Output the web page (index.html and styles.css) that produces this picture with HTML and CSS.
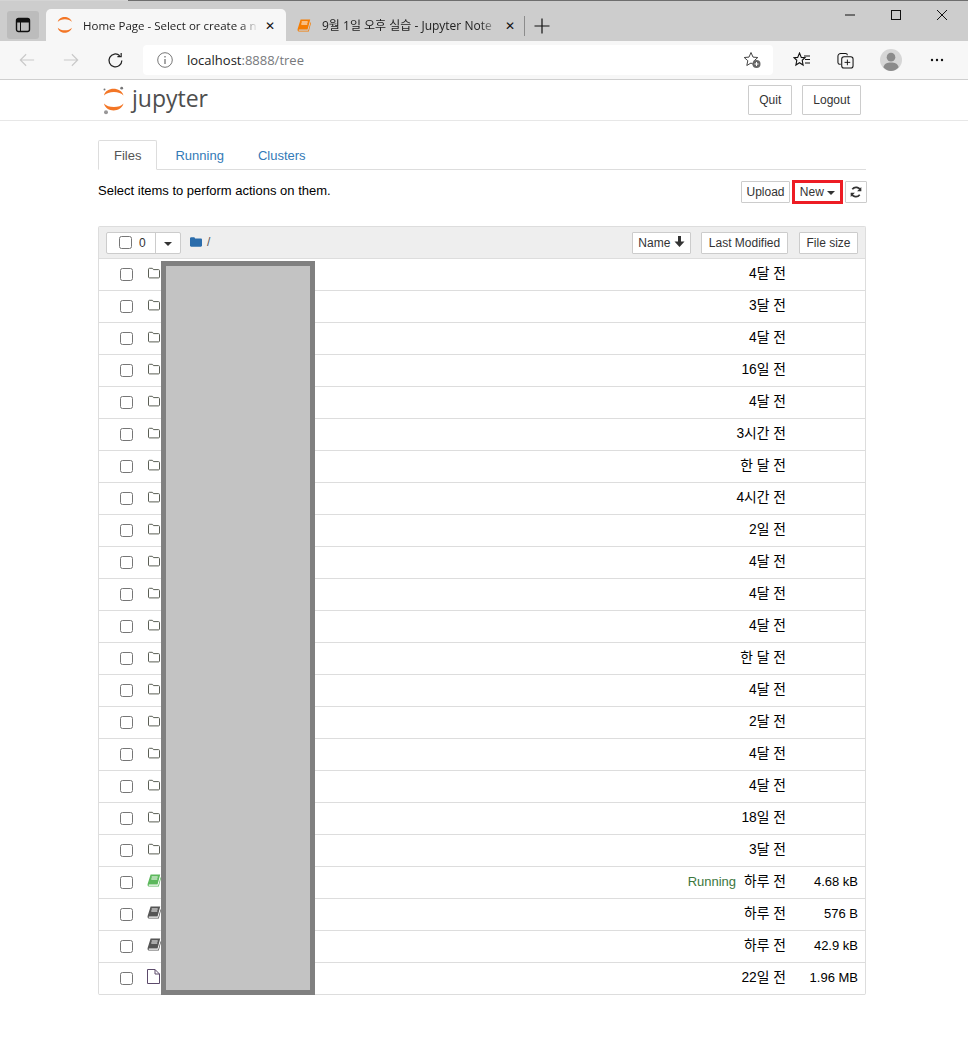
FILE: index.html
```html
<!DOCTYPE html>
<html lang="ko">
<head>
  <meta charset="UTF-8" />
  <title>Home Page - Select or create a notebook</title>
  <link rel="stylesheet" href="styles.css">
</head>
<body>
  <svg class="defs" width="0" height="0">
    <symbol id="i-folder" viewBox="0 0 14 12">
      <path d="M1.500 10V2.200c0-.5.4-.9.9-.9h2.700c.5 0 .8.3 1 .7l.3.6h5.200c.5 0 .9.4.9.9V10c0 .5-.4.9-.9.9H2.400c-.5 0-.9-.4-.9-.9z" fill="none" stroke="#5b5f55" stroke-width="1"/>
    </symbol>
    <symbol id="i-book" viewBox="0 0 14 13">
      <path d="M3.600.6h9.600L10.600 10.600H2.200C1.500 10.600 1.300 11.400 2 11.700h9.200l2.400-8.700.4 1-2.200 8.500H1.900C.6 12.500.3 11 .7 9.800z" fill="currentColor"/>
      <path d="M4.700 3h6M4.300 5h6" stroke="#fff" stroke-width="1"/>
    </symbol>
    <symbol id="i-file" viewBox="0 0 13 15">
      <path d="M.5.500h7.500l4.500 4.500v9.500H.5zM8 .5V5h4.500" fill="#fff" stroke="#5c4a6b" stroke-width="1"/>
    </symbol>
    <symbol id="i-jup" viewBox="0 0 22 29">
      <path d="M1 9.500C3 .6 18 .6 20.500 9.500 17 4.800 5 4.800 1 9.500z" fill="#f37626"/>
      <path d="M1 17.500C3 26.800 18 26.800 20.500 17.500 17 22.200 5 22.200 1 17.500z" fill="#f37626"/>
    </symbol>
  </svg>

  <div class="tabstrip">
    <div class="app-btn">
      <svg width="16" height="16" viewBox="0 0 16 16"><rect x="1.500" y="1.500" width="13" height="13" rx="2" fill="none" stroke="#111" stroke-width="1.400"/><path d="M1.500 5h13V2.500h-13zM5.500 5v9.500" fill="#111" stroke="#111" stroke-width="1"/></svg>
    </div>
    <div class="tab tab-active">
      <svg class="tab-icon" width="16" height="21"><use href="#i-jup"/></svg>
      <span class="tab-title">Home Page - Select or create a n</span>
      <span class="tab-close">✕</span>
    </div>
    <div class="tab">
      <svg class="tab-icon" width="14" height="13" style="color:#f57c00"><use href="#i-book"/></svg>
      <span class="tab-title">9월 1일 오후 실습 - Jupyter Note</span>
      <span class="tab-close">✕</span>
    </div>
    <div class="tab-sep"></div>
    <svg class="tab-plus" width="16" height="16" viewBox="0 0 16 16"><path d="M8 .5v15M.5 8h15" stroke="#111" stroke-width="1.200"/></svg>
    <div class="win-btns">
      <svg width="12" height="12" viewBox="0 0 12 12"><path d="M1 6h10" stroke="#111" stroke-width="1"/></svg>
      <svg width="12" height="12" viewBox="0 0 12 12"><rect x="1.500" y="1.500" width="9" height="9" fill="none" stroke="#111"/></svg>
      <svg width="12" height="12" viewBox="0 0 12 12"><path d="M1 1l10 10M11 1L1 11" stroke="#111" stroke-width="1"/></svg>
    </div>
  </div>

  <div class="addressbar">
    <svg class="nav" width="16" height="16" viewBox="0 0 18 16"><path d="M17 8H1.500M8 1.500L1.500 8 8 14.500" fill="none" stroke="#c9c9c9" stroke-width="1.300"/></svg>
    <svg class="nav" width="16" height="16" viewBox="0 0 18 16"><path d="M1 8h15.500M10 1.500L16.500 8 10 14.500" fill="none" stroke="#c9c9c9" stroke-width="1.300"/></svg>
    <svg class="nav" width="17" height="17" viewBox="0 0 18 18"><path d="M15.700 9A6.800 6.800 0 1 1 13.500 3.900M15 1v4h-4" fill="none" stroke="#222" stroke-width="1.300"/></svg>
    <div class="urlbox">
      <svg width="16" height="16" viewBox="0 0 16 16"><circle cx="8" cy="8" r="7.300" fill="none" stroke="#777" stroke-width="1"/><path d="M8 7v5M8 4v1.500" stroke="#777" stroke-width="1.300"/></svg>
      <span class="url">localhost<span class="url-dim">:8888/tree</span></span>
      <svg class="url-star" width="19" height="18" viewBox="0 0 19 18"><path d="M8 1.500l2 4.600 4.800.4-3.600 3.200 1 4.800L8 12l-4.200 2.500 1-4.800L1.200 6.500 6 6.100z" fill="none" stroke="#444" stroke-width="1"/><circle cx="13.500" cy="13" r="4" fill="#666"/><path d="M13.500 11v4M11.500 13h4" stroke="#fff"/></svg>
    </div>
    <div class="tools">
      <svg width="18" height="16" viewBox="0 0 18 16"><path d="M6.500 1l1.800 4.400 3.700.3-2.800 2.600.9 4.700-3.600-2.300-3.600 2.300.9-4.700L1 5.700l3.700-.3z" fill="none" stroke="#111" stroke-width="1.100"/><path d="M11 4h6M12 7.500h5M12 11h5" stroke="#111" stroke-width="1"/></svg>
      <svg width="17" height="17" viewBox="0 0 18 18"><path d="M4 13H3a2 2 0 0 1-2-2V4.500A3 3 0 0 1 4 1.500h5a2 2 0 0 1 2 2" fill="none" stroke="#111" stroke-width="1.100"/><rect x="5" y="5" width="12" height="12" rx="2.500" fill="#f7f7f7" stroke="#111" stroke-width="1.100"/><path d="M11 8v6M8 11h6" stroke="#111"/></svg>
      <svg width="22" height="22" viewBox="0 0 23 23"><circle cx="11.500" cy="11.500" r="11.500" fill="#d6d6d6"/><circle cx="11.500" cy="8.500" r="4.500" fill="#8b8b8b"/><path d="M3.500 19c1-4 4-5 8-5s7 1 8 5c-2 2.500-5 4-8 4s-6-1.500-8-4z" fill="#8b8b8b"/></svg>
      <svg class="tool-more" width="14" height="4" viewBox="0 0 14 4"><circle cx="2" cy="2" r="1.200" fill="#111"/><circle cx="7" cy="2" r="1.200" fill="#111"/><circle cx="12" cy="2" r="1.200" fill="#111"/></svg>
    </div>
  </div>

  <header class="site-header">
    <div class="container header-inner">
      <div class="logo">
        <svg class="logo-mark" width="22" height="29" viewBox="0 0 22 29">
          <use href="#i-jup"/>
          <circle cx="18.700" cy="2.200" r="1.400" fill="#767677"/>
          <circle cx="1.500" cy="3.500" r="1" fill="#767677"/>
          <circle cx="3" cy="26.200" r="2" fill="#989798"/>
        </svg>
        <span class="logo-text">jupyter</span>
      </div>
      <div class="header-btns">
        <button class="btn btn-big">Quit</button>
        <button class="btn btn-big">Logout</button>
      </div>
    </div>
  </header>

  <main class="container">
    <ul class="tabs">
      <li class="active">Files</li>
      <li>Running</li>
      <li>Clusters</li>
    </ul>

    <div class="actions">
      <span class="hint">Select items to perform actions on them.</span>
      <div class="action-btns">
        <button class="btn btn-upload">Upload</button>
        <button class="btn btn-new">New <i class="caret"></i></button>
        <button class="btn btn-refresh">
          <svg width="12" height="12" viewBox="0 0 12 12"><path d="M10.500 4.600A4.700 4.700 0 0 0 2.300 3.200M1.500 7.400a4.700 4.700 0 0 0 8.200 1.400" fill="none" stroke="#333" stroke-width="1.700"/><path d="M11.300 1v4.200H7.100zM.7 11V6.800h4.200z" fill="#333"/></svg>
        </button>
      </div>
    </div>

    <div class="list">
      <div class="list-head">
        <div class="select-group">
          <label class="select-all"><input type="checkbox"><span>0</span></label>
          <span class="select-drop"><i class="caret"></i></span>
        </div>
        <svg class="crumb-icon" width="12" height="10" viewBox="0 0 14 11"><path d="M0 1.500C0 .700.600 0 1.400 0h3c.8 0 1.100.5 1.400 1.200l.2.300h6.600c.8 0 1.400.6 1.400 1.400v6.700c0 .8-.6 1.400-1.400 1.400H1.400C.6 11 0 10.400 0 9.600z" fill="#2a6cab"/></svg>
        <span class="crumb">/</span>
        <div class="sort-btns">
          <button class="btn sort-name">Name <svg width="11" height="11" viewBox="0 0 11 11"><path d="M4 0h3v5.500h3.500L5.500 11 .5 5.500H4z" fill="#333"/></svg></button>
          <button class="btn sort-date">Last Modified</button>
          <button class="btn sort-size">File size</button>
        </div>
      </div>

      <div class="row"><input type="checkbox"><svg class="row-icon" width="14" height="12"><use href="#i-folder"/></svg><span class="name"></span><span class="date">4달 전</span><span class="size"></span></div>
      <div class="row"><input type="checkbox"><svg class="row-icon" width="14" height="12"><use href="#i-folder"/></svg><span class="name"></span><span class="date">3달 전</span><span class="size"></span></div>
      <div class="row"><input type="checkbox"><svg class="row-icon" width="14" height="12"><use href="#i-folder"/></svg><span class="name"></span><span class="date">4달 전</span><span class="size"></span></div>
      <div class="row"><input type="checkbox"><svg class="row-icon" width="14" height="12"><use href="#i-folder"/></svg><span class="name"></span><span class="date">16일 전</span><span class="size"></span></div>
      <div class="row"><input type="checkbox"><svg class="row-icon" width="14" height="12"><use href="#i-folder"/></svg><span class="name"></span><span class="date">4달 전</span><span class="size"></span></div>
      <div class="row"><input type="checkbox"><svg class="row-icon" width="14" height="12"><use href="#i-folder"/></svg><span class="name"></span><span class="date">3시간 전</span><span class="size"></span></div>
      <div class="row"><input type="checkbox"><svg class="row-icon" width="14" height="12"><use href="#i-folder"/></svg><span class="name"></span><span class="date">한 달 전</span><span class="size"></span></div>
      <div class="row"><input type="checkbox"><svg class="row-icon" width="14" height="12"><use href="#i-folder"/></svg><span class="name"></span><span class="date">4시간 전</span><span class="size"></span></div>
      <div class="row"><input type="checkbox"><svg class="row-icon" width="14" height="12"><use href="#i-folder"/></svg><span class="name"></span><span class="date">2일 전</span><span class="size"></span></div>
      <div class="row"><input type="checkbox"><svg class="row-icon" width="14" height="12"><use href="#i-folder"/></svg><span class="name"></span><span class="date">4달 전</span><span class="size"></span></div>
      <div class="row"><input type="checkbox"><svg class="row-icon" width="14" height="12"><use href="#i-folder"/></svg><span class="name"></span><span class="date">4달 전</span><span class="size"></span></div>
      <div class="row"><input type="checkbox"><svg class="row-icon" width="14" height="12"><use href="#i-folder"/></svg><span class="name"></span><span class="date">4달 전</span><span class="size"></span></div>
      <div class="row"><input type="checkbox"><svg class="row-icon" width="14" height="12"><use href="#i-folder"/></svg><span class="name"></span><span class="date">한 달 전</span><span class="size"></span></div>
      <div class="row"><input type="checkbox"><svg class="row-icon" width="14" height="12"><use href="#i-folder"/></svg><span class="name"></span><span class="date">4달 전</span><span class="size"></span></div>
      <div class="row"><input type="checkbox"><svg class="row-icon" width="14" height="12"><use href="#i-folder"/></svg><span class="name"></span><span class="date">2달 전</span><span class="size"></span></div>
      <div class="row"><input type="checkbox"><svg class="row-icon" width="14" height="12"><use href="#i-folder"/></svg><span class="name"></span><span class="date">4달 전</span><span class="size"></span></div>
      <div class="row"><input type="checkbox"><svg class="row-icon" width="14" height="12"><use href="#i-folder"/></svg><span class="name"></span><span class="date">4달 전</span><span class="size"></span></div>
      <div class="row"><input type="checkbox"><svg class="row-icon" width="14" height="12"><use href="#i-folder"/></svg><span class="name"></span><span class="date">18일 전</span><span class="size"></span></div>
      <div class="row"><input type="checkbox"><svg class="row-icon" width="14" height="12"><use href="#i-folder"/></svg><span class="name"></span><span class="date">3달 전</span><span class="size"></span></div>
      <div class="row"><input type="checkbox"><svg class="row-icon nb-running" width="14" height="13"><use href="#i-book"/></svg><span class="name"></span><span class="running">Running</span><span class="date">하루 전</span><span class="size">4.68 kB</span></div>
      <div class="row"><input type="checkbox"><svg class="row-icon nb" width="14" height="13"><use href="#i-book"/></svg><span class="name"></span><span class="date">하루 전</span><span class="size">576 B</span></div>
      <div class="row"><input type="checkbox"><svg class="row-icon nb" width="14" height="13"><use href="#i-book"/></svg><span class="name"></span><span class="date">하루 전</span><span class="size">42.9 kB</span></div>
      <div class="row"><input type="checkbox"><svg class="row-icon row-file" width="13" height="15"><use href="#i-file"/></svg><span class="name"></span><span class="date">22일 전</span><span class="size">1.96 MB</span></div>

      <!-- names blanked out in the screenshot -->
      <div class="redact"></div>
    </div>
  </main>
</body>
</html>
```

FILE: styles.css
```css
body {
  margin: 0;
  background: #fff;
  color: #000;
  font-family: 'Liberation Sans', 'Noto Sans CJK KR', sans-serif;
  font-size: 13px;
  overflow: hidden;
}

.defs {
  position: absolute;
}

/* Browser chrome */
.tabstrip {
  height: 41px;
  box-sizing: border-box;
  background: #cdcdcd;
  border-top: 1px solid;
  border-image: linear-gradient(to right, #d4d4d4 129px, #6e6e6e 129px) 1;
  display: flex;
  align-items: flex-end;
  font-family: 'Open Sans', 'Noto Sans CJK KR', sans-serif;
  font-size: 12px;
  color: #222;
}

.app-btn {
  width: 32px;
  height: 28px;
  margin: 0 7px 2px 7px;
  background: #bcbcbc;
  border-radius: 3px;
  display: flex;
  align-items: center;
  justify-content: center;
}

.tab {
  width: 240px;
  height: 32px;
  box-sizing: border-box;
  padding: 0 10px 0 11px;
  display: flex;
  align-items: center;
}

.tab-active {
  background: #f7f7f7;
  border-radius: 5px 5px 0 0;
  font-size: 11.5px;
}

.tab-icon {
  flex: none;
  margin-right: 10px;
}

.tab + .tab .tab-icon {
  margin-right: 11px;
}

.tab-title {
  flex: 1;
  white-space: nowrap;
  overflow: hidden;
  -webkit-mask-image: linear-gradient(to right, #000 90%, transparent);
  mask-image: linear-gradient(to right, #000 90%, transparent);
}

.tab-close {
  flex: none;
  width: 12px;
  margin-left: 6px;
  font-size: 12px;
  color: #111;
  text-align: center;
}

.tab-sep {
  width: 1px;
  height: 20px;
  margin: 0 0 5px -2px;
  background: #8c8c8c;
}

.tab-plus {
  margin: 0 0 7px 9px;
}

.win-btns {
  margin-left: auto;
  align-self: flex-start;
  display: flex;
  gap: 34px;
  padding: 8px 20px 0 0;
}

.addressbar {
  height: 38px;
  background: #f7f7f7;
  border-bottom: 1px solid #cfcfcf;
  display: flex;
  align-items: center;
  padding-left: 19px;
}

.nav {
  flex: none;
  margin-right: 28px;
}

.nav:nth-child(3) {
  margin-right: 19px;
}

.urlbox {
  width: 630px;
  height: 30px;
  box-sizing: border-box;
  background: #fff;
  border-radius: 4px;
  display: flex;
  align-items: center;
  padding: 0 11px 0 14px;
}

.url {
  margin-left: 14px;
  font-family: 'Open Sans', sans-serif;
  font-size: 13px;
  color: #222;
}

.url-dim {
  color: #77797c;
}

.url-star {
  margin-left: auto;
}

.tools {
  display: flex;
  align-items: center;
  margin-left: 20px;
  gap: 26px;
}

.tool-more {
  margin-left: 2px;
}

/* Jupyter page */
.container {
  width: 768px;
  margin-left: 98px;
}

.site-header {
  height: 40px;
  border-bottom: 1px solid #e7e7e7;
}

.header-inner {
  display: flex;
  justify-content: space-between;
  align-items: center;
  height: 100%;
}

.logo {
  display: flex;
  align-items: center;
  padding-left: 5px;
}

.logo-text {
  margin-left: 7px;
  font-family: 'Open Sans', sans-serif;
  font-size: 23px;
  line-height: 30px;
  color: #4e4e4e;
  position: relative;
  top: -2px;
}

.header-btns {
  display: flex;
  gap: 10px;
  padding-right: 5px;
}

.btn {
  height: 22px;
  padding: 0 6px;
  background: #fff;
  border: 1px solid #ccc;
  border-radius: 1px;
  font-family: inherit;
  font-size: 12px;
  color: #333;
  white-space: nowrap;
}

.btn-big {
  height: 30px;
  padding: 0 10px;
}

.caret {
  display: inline-block;
  width: 0;
  height: 0;
  vertical-align: middle;
  border-top: 4px solid #333;
  border-left: 4px solid transparent;
  border-right: 4px solid transparent;
}

.tabs {
  list-style: none;
  margin: 19px 0 0;
  padding: 0;
  height: 30px;
  box-sizing: border-box;
  display: flex;
  border-bottom: 1px solid #ddd;
}

.tabs li {
  height: 30px;
  box-sizing: border-box;
  padding: 0 15px;
  margin-right: 2px;
  line-height: 30px;
  color: #337ab7;
  border: 1px solid transparent;
  border-radius: 2px 2px 0 0;
}

.tabs li.active {
  color: #555;
  background: #fff;
  border-color: #ddd #ddd #fff;
}

.actions {
  display: flex;
  justify-content: space-between;
  align-items: center;
  height: 24px;
  margin-top: 10px;
  margin-right: -1px;
}

.hint {
  position: relative;
  top: -2px;
}

.action-btns {
  display: flex;
  align-items: center;
  gap: 2px;
}

.btn-upload {
  width: 49px;
  padding: 0;
}

.btn-new {
  height: 24px;
  width: 51px;
  padding: 0;
  border: 3px solid #ed1c24;
  border-radius: 0;
}

.btn-refresh {
  width: 22px;
  padding: 0;
  display: flex;
  align-items: center;
  justify-content: center;
}

.list {
  position: relative;
  margin-top: 22px;
  border: 1px solid #ddd;
  border-bottom: none;
  border-radius: 2px;
}

.list-head {
  height: 31px;
  background: #eee;
  border-bottom: 1px solid #ddd;
  display: flex;
  align-items: center;
  padding: 0 7px;
}

.select-group {
  display: flex;
  height: 22px;
  background: #fff;
  border: 1px solid #ccc;
  border-radius: 2px;
  box-sizing: border-box;
}

.select-all {
  width: 49px;
  box-sizing: border-box;
  display: flex;
  align-items: center;
  padding-left: 12px;
  gap: 7px;
  font-size: 12px;
  color: #333;
  border-right: 1px solid #ccc;
}

.select-all input {
  margin: 0;
}

.select-drop {
  width: 24px;
  display: flex;
  align-items: center;
  justify-content: center;
  padding-top: 2px;
}

.crumb-icon {
  margin: -2px 0 0 9px;
}

.crumb {
  margin: -2px 0 0 5px;
  color: #555;
  font-size: 12px;
}

.sort-btns {
  margin-left: auto;
  display: flex;
  gap: 10px;
}

.sort-name {
  width: 59px;
  padding: 0;
}

.sort-date {
  width: 87px;
  padding: 0;
}

.sort-size {
  width: 59px;
  padding: 0;
  margin-left: 1px;
}

.row {
  height: 31px;
  border-bottom: 1px solid #ddd;
  display: flex;
  align-items: center;
  padding-left: 21px;
}

.row input {
  margin: 0;
  flex: none;
}

.row-icon {
  margin: -4px 0 0 14px;
  flex: none;
}

.nb {
  color: #555;
}

.nb-running {
  color: #5cb85c;
}

.row-file {
  margin-top: -5px;
}

.name {
  flex: 1;
}

.running {
  color: #3c763d;
  margin: 0 8px 0 0;
  position: relative;
  top: -1px;
}

.date {
  flex: none;
  font-size: 13.8px;
  position: relative;
  top: -3px;
  text-align: right;
}

.size {
  width: 72px;
  margin-right: 7px;
  flex: none;
  text-align: right;
  position: relative;
  top: -1px;
}

.redact {
  position: absolute;
  left: 62px;
  top: 34px;
  bottom: 0;
  width: 154px;
  box-sizing: border-box;
  background: #c3c3c3;
  border: 5px solid #808080;
}
```
